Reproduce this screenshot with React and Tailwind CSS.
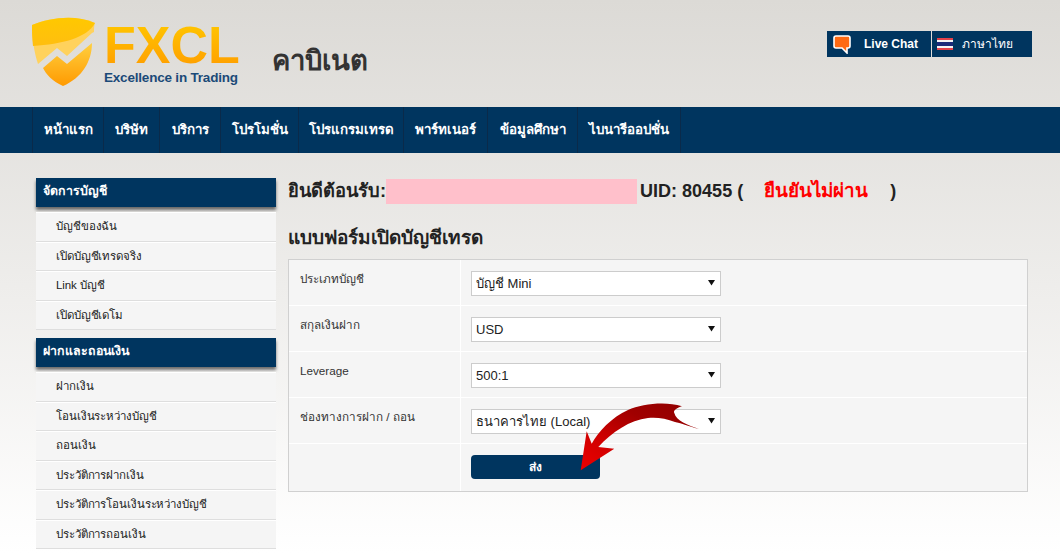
import React from 'react';

const navItems = [
  { label: 'หน้าแรก', width: 'w-[71px]' },
  { label: 'บริษัท', width: 'w-[56px]' },
  { label: 'บริการ', width: 'w-[61px]' },
  { label: 'โปรโมชั่น', width: 'w-[78px]' },
  { label: 'โปรแกรมเทรด', width: 'w-[105px]' },
  { label: 'พาร์ทเนอร์', width: 'w-[84px]' },
  { label: 'ข้อมูลศึกษา', width: 'w-[90px]' },
  { label: 'ไบนารีออปชั่น', width: 'w-[104px]' },
];

const sideGroups = [
  { title: 'จัดการบัญชี', items: ['บัญชีของฉัน', 'เปิดบัญชีเทรดจริง', 'Link บัญชี', 'เปิดบัญชีเดโม'] },
  { title: 'ฝากและถอนเงิน', items: ['ฝากเงิน', 'โอนเงินระหว่างบัญชี', 'ถอนเงิน', 'ประวัติการฝากเงิน', 'ประวัติการโอนเงินระหว่างบัญชี', 'ประวัติการถอนเงิน'] },
];

const formRows = [
  { label: 'ประเภทบัญชี', value: 'บัญชี Mini', options: ['บัญชี Mini'] },
  { label: 'สกุลเงินฝาก', value: 'USD', options: ['USD'] },
  { label: 'Leverage', value: '500:1', options: ['500:1'] },
  { label: 'ช่องทางการฝาก / ถอน', value: 'ธนาคารไทย (Local)', options: ['ธนาคารไทย (Local)'] },
];

const Shield = () => (
  <svg width="64" height="72" viewBox="0 0 64 72" className="shrink-0">
    <defs>
      <linearGradient id="shieldTop" x1="0" y1="0" x2="0" y2="1">
        <stop offset="0" stopColor="#ffc800" />
        <stop offset="1" stopColor="#ffbe10" />
      </linearGradient>
      <linearGradient id="shieldBottom" x1="0" y1="0" x2="0" y2="1">
        <stop offset="0" stopColor="#ffd040" />
        <stop offset="1" stopColor="#ff9a00" />
      </linearGradient>
    </defs>
    <path d="M0 9 C18 2 42 -2 63 7 C62 9 62 13 62 16 L60 17 L35 40 L25 32 L6 48 C2 36 0 22 0 9 Z" fill="#ffd25c" />
    <path d="M0 9 C18 2 42 -2 63 7 C55 22 30 28 1 30 C0 22 0 16 0 9 Z" fill="url(#shieldTop)" />
    <path d="M60 27 C60 45 50 62 31 70 C20 65 14 58 11 52 L25 40 L35 48 Z" fill="url(#shieldBottom)" />
  </svg>
);

const ChatIcon = () => (
  <svg width="18" height="19" viewBox="0 0 18 19">
    <path d="M3 1 H15 Q17 1 17 3 V11 Q17 13 15 13 H14 V18 L9 13 H3 Q1 13 1 11 V3 Q1 1 3 1 Z" fill="#ff6a13" stroke="#fff" strokeWidth="1.6" />
  </svg>
);

const ThaiFlag = () => (
  <svg width="16" height="12" viewBox="0 0 16 12">
    <rect width="16" height="12" fill="#f4f4f4" />
    <rect y="0" width="16" height="2" fill="#e2414a" />
    <rect y="4" width="16" height="4" fill="#1c2a7a" />
    <rect y="10" width="16" height="2" fill="#e2414a" />
  </svg>
);

const Arrow = () => (
  <svg width="132" height="78" viewBox="0 0 132 78" className="absolute left-[580px] top-[402px]">
    <defs>
      <linearGradient id="arrowFill" x1="1" y1="0" x2="0" y2="1">
        <stop offset="0" stopColor="#8f0000" />
        <stop offset="0.35" stopColor="#a00000" />
        <stop offset="0.65" stopColor="#cc0000" />
        <stop offset="1" stopColor="#ee0000" />
      </linearGradient>
    </defs>
    <path d="M0.7 68.3 L6.7 29.3 L11.7 41.7 C18 30 32 15 48 8 C62 2 85 -1 102 4.3 C96 6 93 9 94.3 11 C96 19 108 23 119 27 C108 24 100 21 95 20 C86 16 75 15 68 16 C50 18 32 30 18.3 45 L34.3 46.7 Z" fill="url(#arrowFill)" />
  </svg>
);

export default function App() {
  return (
    <div className="relative h-[553px] w-[1060px] overflow-hidden bg-gradient-to-b from-[#dcdad6] to-[#ffffff] font-['Liberation_Sans',Tahoma,sans-serif] text-[#222]">
      {/* header */}
      <header className="flex h-[107px] justify-between pl-[32px] pr-[28px]">
        <div className="flex items-start">
          <div className="mt-[16px]">
            <Shield />
          </div>
          <div className="ml-[8px] mt-[20px] flex w-[136px] flex-col">
            <span className="bg-gradient-to-b from-[#ffc800] to-[#ff9c00] bg-clip-text text-[52px] font-bold leading-[50px] text-transparent">FXCL</span>
            <span className="text-[13.5px] font-bold leading-[16px] tracking-[-0.2px] text-[#1b4a78] whitespace-nowrap">Excellence in Trading</span>
          </div>
          <h1 className="ml-[32px] mt-[44px] text-[27.5px] font-bold leading-[34px] text-[#333]">คาบิเนต</h1>
        </div>
        <div className="mt-[31px] flex h-[26px] gap-[1px] text-[12px] font-bold text-white">
          <a className="flex w-[104px] items-center bg-[#00355f] pl-[6px]">
            <ChatIcon />
            <span className="ml-[13px]">Live Chat</span>
          </a>
          <a className="flex w-[100px] items-center bg-[#00355f] pl-[5px]">
            <ThaiFlag />
            <span className="ml-[9px] font-normal">ภาษาไทย</span>
          </a>
        </div>
      </header>

      {/* nav */}
      <nav className="flex h-[46px] bg-[#00355f] pl-[32px]">
        {navItems.map((item) => (
          <a key={item.label} className={`${item.width} flex items-center justify-center whitespace-nowrap border-l border-[#0a2a4a] text-[13.3px] font-bold text-white last:border-r`}>
            {item.label}
          </a>
        ))}
      </nav>

      <div className="flex pl-[36px] pt-[25px]">
        {/* sidebar */}
        <aside className="flex w-[240px] shrink-0 flex-col gap-[8px]">
          {sideGroups.map((group) => (
            <div key={group.title}>
              <div className="flex h-[29px] items-center bg-[#00355f] pb-[2px] pl-[7px] text-[12.4px] font-bold text-white shadow-[0_3px_3px_rgba(0,0,0,0.55)]">
                {group.title}
              </div>
              <ul className="mt-[5px]">
                {group.items.map((item) => (
                  <li key={item} className="flex h-[29.5px] items-center border-b border-t border-b-[#dedede] border-t-white bg-[#f5f5f5] pl-[20px] text-[11.5px] tracking-[-0.1px] text-[#222]">
                    {item}
                  </li>
                ))}
              </ul>
            </div>
          ))}
        </aside>

        {/* main */}
        <main className="ml-[12px] w-[740px]">
          <div className="flex h-[26px] items-center text-[18px] font-bold text-[#222]">
            <span className="text-[18.3px]">ยินดีต้อนรับ:</span>
            <span className="h-[25px] w-[251px] bg-[#ffc0cb]" />
            <span className="ml-[3px]">UID: 80455 (</span>
            <span className="ml-[21px] text-[18.8px] text-[#f00]">ยืนยันไม่ผ่าน</span>
            <span className="ml-[22px]">)</span>
          </div>
          <h2 className="mt-[21px] text-[19px] font-bold leading-[26px] text-[#222]">แบบฟอร์มเปิดบัญชีเทรด</h2>
          <form className="mt-[8px] border border-[#d0d0d0] bg-[#f5f5f5]">
            {formRows.map((row) => (
              <div key={row.label} className="flex h-[46px] border-b border-white">
                <label className="w-[172px] border-r border-white pl-[11px] pt-[9px] text-[11.7px] leading-[20px] text-[#333]">{row.label}</label>
                <div className="relative ml-[10px] mt-[11px] h-[25px] w-[250px]">
                  <select
                    defaultValue={row.value}
                    className="h-full w-full appearance-none border border-[#ccc] bg-white pl-[4px] text-[13px] text-[#222]"
                  >
                    {row.options.map((o) => (
                      <option key={o}>{o}</option>
                    ))}
                  </select>
                  <svg width="7" height="7" viewBox="0 0 8 8" className="absolute right-[6px] top-[8px]">
                    <path d="M0 1 H8 L4 7.5 Z" fill="#111" />
                  </svg>
                </div>
              </div>
            ))}
            <div className="flex h-[47px]">
              <div className="w-[172px] border-r border-white" />
              <button type="button" className="ml-[10px] mt-[11px] h-[24px] w-[129px] rounded-[4px] bg-[#00355f] text-[12px] font-bold text-white">
                ส่ง
              </button>
            </div>
          </form>
        </main>
      </div>

      <Arrow />
    </div>
  );
}
